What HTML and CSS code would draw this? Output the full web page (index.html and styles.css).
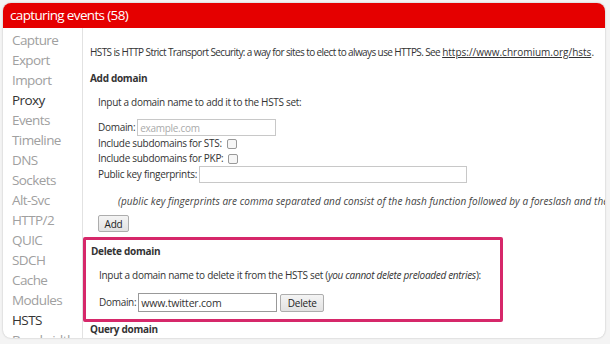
FILE: index.html
```html
<!DOCTYPE html>
<html>
<head>
<meta charset="utf-8">
<link rel="stylesheet" href="styles.css">
</head>
<body>
<div class="window">
  <div class="titlebar">capturing events (58)</div>
  <div class="body">
    <nav class="sidebar">
      <div class="tab">Capture</div>
      <div class="tab">Export</div>
      <div class="tab">Import</div>
      <div class="tab dark">Proxy</div>
      <div class="tab">Events</div>
      <div class="tab">Timeline</div>
      <div class="tab">DNS</div>
      <div class="tab">Sockets</div>
      <div class="tab">Alt-Svc</div>
      <div class="tab">HTTP/2</div>
      <div class="tab">QUIC</div>
      <div class="tab">SDCH</div>
      <div class="tab">Cache</div>
      <div class="tab">Modules</div>
      <div class="tab dark">HSTS</div>
      <div class="tab">Bandwidth</div>
    </nav>
    <main class="main">
      <p class="intro">HSTS is HTTP Strict Transport Security: a way for sites to elect to always use HTTPS. See <a class="link" href="#">https://www.chromium.org/hsts</a>.</p>
      <h4 class="heading">Add domain</h4>
      <div class="section">
        <p class="line">Input a domain name to add it to the HSTS set:</p>
        <div class="row row-domain">Domain:<input class="text domain-input" type="text" placeholder="example.com"></div>
        <div class="row">Include subdomains for STS:<input class="check" type="checkbox"></div>
        <div class="row">Include subdomains for PKP:<input class="check" type="checkbox"></div>
        <div class="row row-pk">Public key fingerprints:<input class="text pk-input" type="text"></div>
        <p class="note">(public key fingerprints are comma separated and consist of the hash function followed by a foreslash and the base64 encoded fingerprint, for example sha256/...)</p>
        <button class="btn add-btn">Add</button>
      </div>
      <div class="highlight">
        <h4 class="heading">Delete domain</h4>
        <div class="section">
          <p class="line">Input a domain name to delete it from the HSTS set (<i>you cannot delete preloaded entries</i>):</p>
          <div class="row row-del">Domain:<input class="text del-input" type="text" value="www.twitter.com"><button class="btn del-btn">Delete</button></div>
        </div>
      </div>
      <h4 class="heading query">Query domain</h4>
    </main>
  </div>
</div>
</body>
</html>
```
FILE: styles.css
```css
html, body {
  margin: 0;
  padding: 0;
}
body {
  background: #f4f4f4;
  width: 610px;
  height: 344px;
  overflow: hidden;
  font-family: "Open Sans", "Noto Sans", sans-serif;
}
.window {
  margin: 3px 0 0 3px;
  width: 602px;
  height: 335px;
  border-radius: 8px;
  overflow: hidden;
  background: #fff;
  box-shadow: 0 0 2px rgba(0,0,0,0.25);
  display: flex;
  flex-direction: column;
}
.titlebar {
  height: 25px;
  flex: none;
  background: #e50000;
  color: #fff;
  font-size: 13.5px;
  letter-spacing: -0.65px;
  line-height: 25px;
  padding-left: 7px;
  white-space: nowrap;
}
.body {
  display: flex;
  flex: 1;
  min-height: 0;
}
.sidebar {
  width: 70px;
  flex: none;
  border-right: 1px solid #e2e2e2;
  padding: 2px 0 0 9px;
  font-size: 13.5px;
  letter-spacing: -0.6px;
  line-height: 20px;
  color: #a0a0a0;
  overflow: hidden;
  white-space: nowrap;
}
.tab.dark {
  color: #333;
}
.main {
  flex: 1;
  min-width: 0;
  padding-left: 7px;
  font-size: 10px;
  letter-spacing: -0.3px;
  line-height: 15px;
  color: #333;
  overflow: hidden;
  white-space: nowrap;
}
p, h4 {
  margin: 0;
}
.intro {
  margin-top: 17px;
  letter-spacing: -0.6px;
}
.link {
  color: #333;
  letter-spacing: 0;
}
.heading {
  font-weight: bold;
  font-size: 10px;
  margin-top: 11px;
}
.section {
  padding-left: 8px;
}
.line {
  margin-top: 9px;
}
.row {
  display: flex;
  align-items: center;
  height: 15px;
}
.row-domain {
  margin-top: 9px;
  height: 17px;
}
.row-pk {
  height: 17px;
}
.text {
  font-family: "Open Sans", "Noto Sans", sans-serif;
  font-size: 10px;
  letter-spacing: -0.3px;
  border: 1px solid #c8c8c8;
  padding: 0 2px;
  margin: 0 0 0 2px;
  height: 17px;
  box-sizing: border-box;
  color: #333;
  outline: none;
}
.text::placeholder {
  color: #aaa;
}
.domain-input {
  width: 139px;
}
.pk-input {
  width: 268px;
}
.check {
  appearance: none;
  -webkit-appearance: none;
  width: 10px;
  height: 10px;
  border: 1px solid #999;
  border-radius: 2px;
  background: #f6f6f6;
  margin: 0 0 0 5px;
}
.note {
  font-style: italic;
  letter-spacing: 0.05px;
  margin-top: 11px;
  padding-left: 20px;
  color: #444;
}
.btn {
  font-family: "Open Sans", "Noto Sans", sans-serif;
  font-size: 10px;
  letter-spacing: -0.2px;
  color: #222;
  background: linear-gradient(#f4f4f4, #e2e2e2);
  border: 1px solid #adadad;
  border-radius: 2px;
  padding: 0 4px;
  box-sizing: border-box;
}
.add-btn {
  margin-top: 6px;
  height: 17px;
  width: 31px;
}
.highlight {
  margin: 5px 0 0 -7px;
  width: 420px;
  height: 85px;
  box-sizing: border-box;
  border: 3px solid #d6286a;
  border-radius: 2px;
  padding-left: 5px;
}
.highlight .heading {
  margin-top: 4px;
}
.row-del {
  margin-top: 10px;
  height: 19px;
}
.del-input {
  width: 139px;
  height: 19px;
  border-color: #999;
  font-size: 10.5px;
  letter-spacing: -0.2px;
}
.del-btn {
  margin-left: 3px;
  height: 18px;
  width: 44px;
}
.heading.query {
  margin-top: 0;
}
```
